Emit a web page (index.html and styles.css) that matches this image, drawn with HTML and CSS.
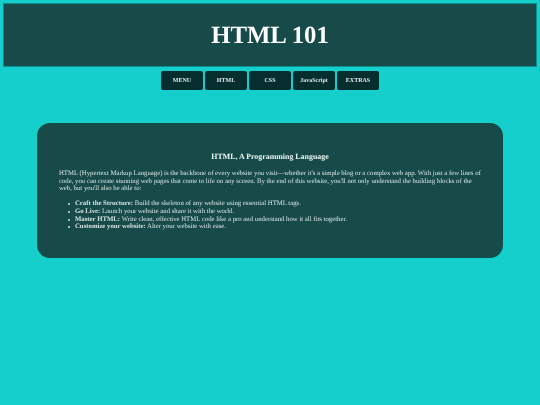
FILE: index.html
```html
<!DOCTYPE html>
<html lang="en">
<head>
  <meta charset="UTF-8" />
  <title>HTML 101</title>
  <link rel="stylesheet" href="styles.css">
</head>
<body>
  <header class="site-header">
    <h1>HTML 101</h1>
  </header>
  <nav class="menu">
    <a class="menu-btn" href="#">MENU</a>
    <a class="menu-btn" href="#">HTML</a>
    <a class="menu-btn" href="#">CSS</a>
    <a class="menu-btn" href="#">JavaScript</a>
    <a class="menu-btn" href="#">EXTRAS</a>
  </nav>
  <main class="card">
    <h2>HTML, A Programming Language</h2>
    <p>HTML (Hypertext Markup Language) is the backbone of every website you visit—whether it's a simple blog or a complex web app. With just a few lines of code, you can create stunning web pages that come to life on any screen. By the end of this website, you'll not only understand the building blocks of the web, but you'll also be able to:</p>
    <ul>
      <li><strong>Craft the Structure:</strong> Build the skeleton of any website using essential HTML tags.</li>
      <li><strong>Go Live:</strong> Launch your website and share it with the world.</li>
      <li><strong>Master HTML:</strong> Write clean, effective HTML code like a pro and understand how it all fits together.</li>
      <li><strong>Customize your website:</strong> Alter your website with ease.</li>
    </ul>
  </main>
</body>
</html>
```

FILE: styles.css
```css
html, body {
  margin: 0;
  padding: 0;
}

body {
  background: #14cfcb;
  font-family: "Liberation Serif", "Times New Roman", serif;
  color: #d6e2e1;
  min-height: 405px;
  text-rendering: geometricPrecision;
}

.site-header, .menu, .card {
  will-change: transform;
}

.site-header {
  margin: 3px 3px 0;
  height: 64px;
  box-sizing: border-box;
  padding-top: 1px;
  background: #174b4a;
  border: 1px solid #0e8e8c;
  display: flex;
  align-items: center;
  justify-content: center;
}

.site-header h1 {
  margin: 0;
  font-size: 24.75px;
  font-weight: bold;
  color: #fff;
}

.menu {
  display: flex;
  justify-content: center;
  gap: 2px;
  margin-top: 4px;
}

.menu-btn {
  width: 42px;
  height: 19px;
  display: flex;
  align-items: center;
  justify-content: center;
  background: #062e2f;
  border-radius: 2px;
  color: #dfe9e9;
  font-size: 6px;
  font-weight: bold;
  text-decoration: none;
}

.card {
  margin: 33px 37px 0;
  height: 135px;
  box-sizing: border-box;
  padding: 29px 22px 0;
  background: #174b4a;
  border-radius: 13px;
  font-size: 6.75px;
  line-height: 7.7px;
}

.card h2 {
  margin: 0 0 8px;
  font-size: 7.9px;
  line-height: 10px;
  font-weight: bold;
  text-align: center;
  color: #eef4f4;
}

.card p {
  margin: 0 0 7px;
}

.card ul {
  margin: 0;
  padding-left: 16px;
  list-style: none;
}

.card li {
  position: relative;
}

.card li::before {
  content: "";
  position: absolute;
  left: -7px;
  top: 3px;
  width: 2px;
  height: 2px;
  border-radius: 50%;
  background: #d6e2e1;
}
```
